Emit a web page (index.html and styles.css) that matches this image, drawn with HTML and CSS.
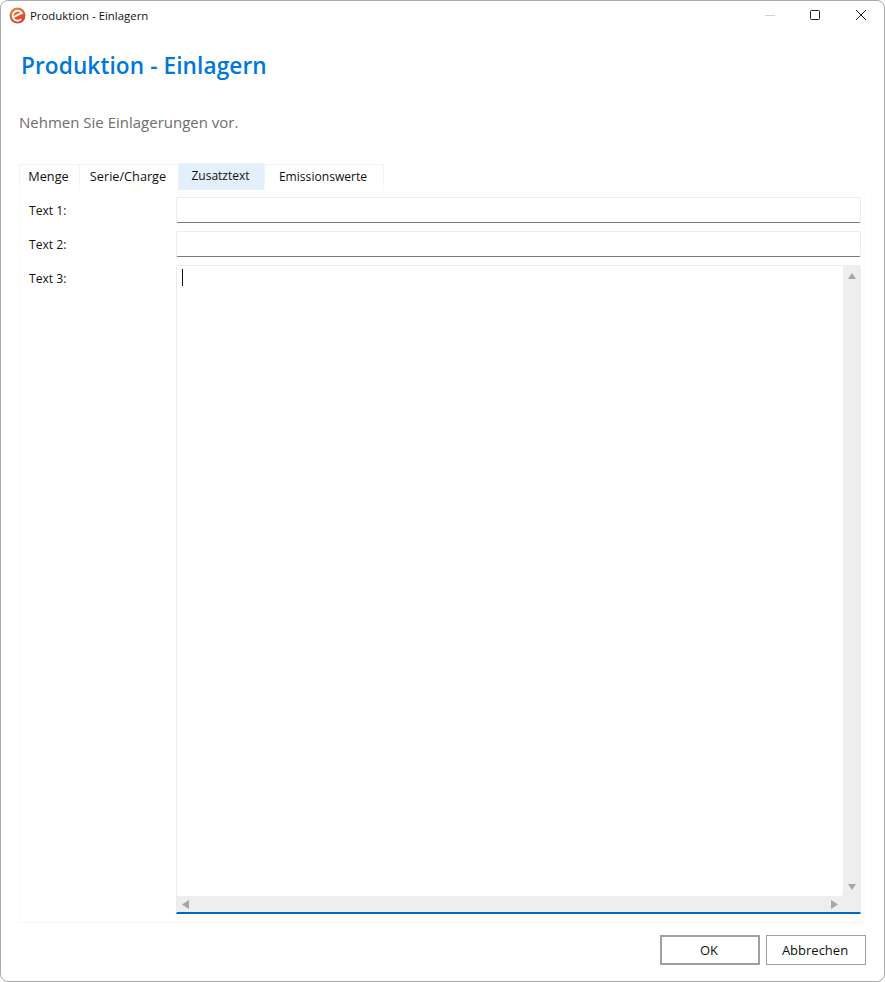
FILE: index.html
```html
<!DOCTYPE html>
<html lang="de">
<head>
<meta charset="utf-8">
<title>Produktion - Einlagern</title>
<link rel="stylesheet" href="styles.css">
</head>
<body>
<div class="window">
  <header class="titlebar">
    <svg class="app-icon" width="17" height="17" viewBox="0 0 17 17">
      <defs>
        <linearGradient id="logo" x1="0" y1="0" x2="0.6" y2="1">
          <stop offset="0" stop-color="#f08a35"/>
          <stop offset="1" stop-color="#d8402a"/>
        </linearGradient>
      </defs>
      <circle cx="8.5" cy="8.5" r="8" fill="url(#logo)"/>
      <path d="M3.8 10.4 L13.2 5.8" stroke="#fff" stroke-width="1.8" fill="none"/>
      <path d="M13.3 7 A5 5 0 1 0 12.2 12.2" stroke="#fff" stroke-width="1.8" fill="none"/>
    </svg>
    <span class="title-text">Produktion - Einlagern</span>
    <div class="win-controls">
      <svg class="win-btn" width="14" height="14" viewBox="0 0 14 14"><path d="M2 7.5H12" stroke="#d2d2d2"/></svg>
      <svg class="win-btn" width="14" height="14" viewBox="0 0 14 14"><rect x="2.5" y="2.5" width="9" height="9" rx="1" stroke="#222" fill="none"/></svg>
      <svg class="win-btn win-close" width="14" height="14" viewBox="0 0 14 14"><path d="M2 2L12 12M12 2L2 12" stroke="#222" fill="none"/></svg>
    </div>
  </header>
  <h1 class="heading">Produktion - Einlagern</h1>
  <p class="subheading">Nehmen Sie Einlagerungen vor.</p>
  <main class="tabs-wrap">
    <nav class="tabs">
      <div class="tab tab-menge">Menge</div>
      <div class="tab tab-serie">Serie/Charge</div>
      <div class="tab tab-active">Zusatztext</div>
      <div class="tab tab-emis">Emissionswerte</div>
    </nav>
    <section class="panel">
      <div class="row">
        <label class="label">Text 1:</label>
        <div class="input"></div>
      </div>
      <div class="row">
        <label class="label">Text 2:</label>
        <div class="input"></div>
      </div>
      <div class="row row-grow">
        <label class="label">Text 3:</label>
        <div class="textarea">
          <div class="text-body">
            <div class="text-content"><span class="caret"></span></div>
            <div class="vscroll">
              <svg width="8" height="6" viewBox="0 0 8 6"><path d="M0 6L4 0L8 6Z" fill="#a6a6a6"/></svg>
              <svg width="8" height="6" viewBox="0 0 8 6"><path d="M0 0L4 6L8 0Z" fill="#a6a6a6"/></svg>
            </div>
          </div>
          <div class="hscroll">
            <svg width="7" height="9" viewBox="0 0 7 9"><path d="M7 0L0 4.5L7 9Z" fill="#a6a6a6"/></svg>
            <svg width="7" height="9" viewBox="0 0 7 9"><path d="M0 0L7 4.5L0 9Z" fill="#a6a6a6"/></svg>
          </div>
        </div>
      </div>
    </section>
  </main>
  <footer class="footer">
    <button class="btn btn-default">OK</button>
    <button class="btn">Abbrechen</button>
  </footer>
</div>
</body>
</html>
```
FILE: styles.css
```css
* { box-sizing: border-box; }
html, body { margin: 0; height: 982px; background: #fff; overflow: hidden; }
body { font-family: "Open Sans", "Noto Sans", sans-serif; color: #111; }
.window {
  width: 885px; height: 982px;
  display: flex; flex-direction: column;
  background: #fff;
  border: 1px solid #a9a9a9;
  border-radius: 8px;
}
.titlebar { height: 28px; margin-bottom: 2px; display: flex; align-items: center; padding-left: 8px; flex: none; }
.app-icon { flex: none; }
.title-text { margin-left: 4px; font-size: 11.4px; color: #111; }
.win-controls { margin-left: auto; display: flex; gap: 31px; padding-right: 16px; }
.win-btn { display: block; }
.win-close { margin-left: 1px; }
.heading {
  margin: 0; padding: 19px 0 0 20px; height: 61px;
  font-size: 22.6px; line-height: 32px; font-weight: 600; color: #0078d7; letter-spacing: 0.1px;
}
.subheading {
  margin: 0; padding: 20px 0 0 18px; height: 71px;
  font-size: 15px; line-height: 20px; color: #6e6e6e;
}
.tabs-wrap { width: 846px; margin-left: 18px; height: 760px; flex: none; }
.tabs { display: flex; height: 27px; font-size: 12.1px; }
.tab {
  width: 60px; height: 26px; margin-top: 1px; padding: 0 2px 2px 0;
  display: flex; align-items: center; justify-content: center;
  border: 1px solid #f5f5f5; border-bottom: 0; border-right: 0;
}
.tab-menge { font-size: 12.7px; padding-bottom: 4px; }
.tab-serie { width: 99px; font-size: 12.7px; padding-bottom: 4px; }
.tab-active { width: 86px; height: 27px; margin-top: 0; background: #e3f0fb; border-color: #eef3f7; padding-bottom: 4px; font-size: 12px; }
.tab-emis { width: 120px; border-right: 1px solid #f5f5f5; }
.panel {
  height: 733px; padding-top: 7px;
  display: flex; flex-direction: column; gap: 8px;
  border: 1px solid #fcfcfc; border-top: 0; border-bottom-color: #f5f5f5;
}
.row { display: flex; height: 26px; padding-right: 3px; }
.row-grow { height: 649px; }
.label { width: 156px; padding: 5px 0 0 9px; font-size: 12.1px; line-height: 17px; flex: none; }
.input { flex: 1; border: 1px solid #ececec; border-bottom: 1px solid #7a7a7a; border-radius: 2px; }
.textarea {
  flex: 1; display: flex; flex-direction: column;
  background: #eeeeee;
  border: 1px solid #ececec;
  border-bottom: 2px solid #0067c0; border-radius: 2px 2px 0 0;
}
.text-body { flex: 1; display: flex; min-height: 0; }
.text-content { flex: 1; padding: 3px 0 0 5px; background: #fff; border-bottom-right-radius: 3px; }
.caret { display: block; width: 1px; height: 17px; background: #111; }
.vscroll {
  width: 17px;
  display: flex; flex-direction: column; justify-content: space-between; align-items: center;
  padding: 7px 0 6px; flex: none;
}
.hscroll {
  height: 16px;
  display: flex; justify-content: space-between; align-items: center;
  padding: 0 22px 0 5px; flex: none;
}
.footer { flex: 1; display: flex; justify-content: flex-end; align-items: flex-start; gap: 6px; padding: 12px 18px 0 0; }
.btn {
  width: 100px; height: 30px;
  background: #fff; border: 1px solid #a0a0a0; border-radius: 0;
  font-family: inherit; font-size: 13px; color: #111; padding: 0 2px 0 0;
}
.btn-default { border: 2px solid #a0a0a0; }
```
